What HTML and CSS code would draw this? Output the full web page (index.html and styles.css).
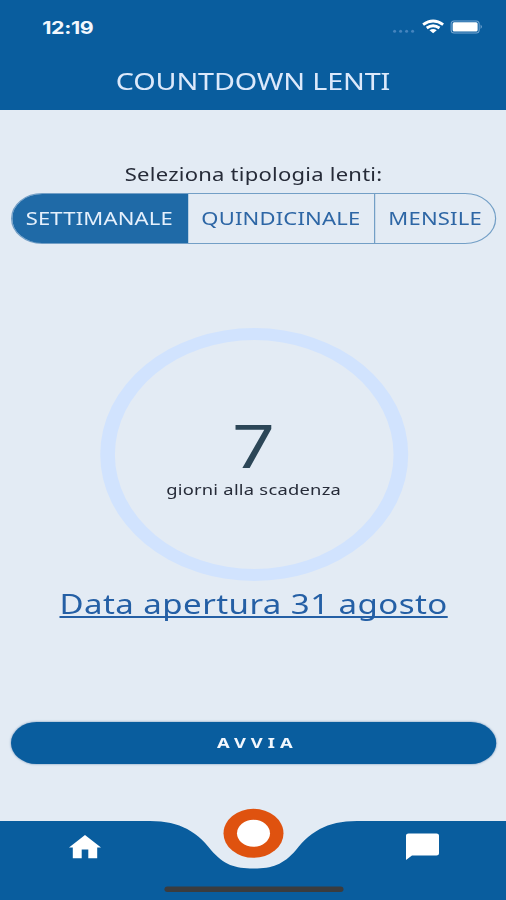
FILE: index.html
```html
<!DOCTYPE html>
<html lang="it">
<head>
<meta charset="utf-8">
<title>Countdown lenti</title>
<link rel="stylesheet" href="styles.css">
</head>
<body>
<div class="phone">
  <header class="header">
    <div class="status">
      <span class="time">12:19</span>
      <svg class="status-icons" viewBox="0 0 92 20" preserveAspectRatio="none">
        <g fill="#4584be"><circle cx="3.5" cy="13.2" r="1.5"/><circle cx="9.5" cy="13.2" r="1.5"/><circle cx="15.5" cy="13.2" r="1.5"/><circle cx="21.5" cy="13.2" r="1.5"/></g>
        <g fill="none" stroke="#fff" stroke-width="2.9"><path d="M32 6.6Q42 -.6 52 6.6"/><path d="M35.6 10Q42 5.4 48.4 10"/></g>
        <path d="M38.4 12.3Q42 9.8 45.6 12.3L42 15.2Z" fill="#fff"/>
        <rect x="60" y="2.9" width="28" height="12" rx="3" fill="none" stroke="#79a8d3"/>
        <rect x="61.5" y="4.3" width="25" height="9.2" rx="1.5" fill="#fff"/>
        <path d="M89.5 6.5Q92 8.8 89.5 11Z" fill="#79a8d3"/>
      </svg>
    </div>
    <h1 class="title">COUNTDOWN LENTI</h1>
  </header>
  <main class="main">
    <p class="label">Seleziona tipologia lenti:</p>
    <div class="segments">
      <button class="segment weekly active">SETTIMANALE</button>
      <button class="segment biweekly">QUINDICINALE</button>
      <button class="segment monthly">MENSILE</button>
    </div>
    <div class="ring">
      <span class="days">7</span>
      <span class="caption">giorni alla scadenza</span>
    </div>
    <a class="date">Data apertura 31 agosto</a>
    <button class="start">AVVIA</button>
  </main>
  <nav class="nav">
    <svg class="nav-art" viewBox="0 0 506 92" preserveAspectRatio="none">
      <path d="M0 13H150C181 13 198 25 211 42C224 57 235 60.5 253.5 60.5C272 60.5 283 57 296 42C309 25 326 13 357 13H506V92H0Z" fill="#095d9e"/>
      <ellipse cx="253.5" cy="25.3" rx="30" ry="24.5" fill="#df520f"/>
      <ellipse cx="253.5" cy="25.3" rx="16.5" ry="13.5" fill="#fff"/>
      <path d="M85 27L101 39.5H97.2V50.2H88.3V41.5H81.7V50.2H72.8V39.5H69Z" fill="#fff"/>
      <path d="M408.5 25.5H436.5Q439 25.5 439 27.5V45.5Q439 47.5 436.5 47.5H412L406 52V27.5Q406 25.5 408.5 25.5Z" fill="#fff"/>
      <rect x="164.5" y="78.5" width="179" height="5.5" rx="2.8" fill="#3b3c3e"/>
    </svg>
  </nav>
</div>
</body>
</html>
```

FILE: styles.css
```css
* {
  box-sizing: border-box;
}

body {
  margin: 0;
  width: 506px;
  height: 900px;
  overflow: hidden;
  background: #e3ebf4;
}

button {
  font: inherit;
  border: 0;
  padding: 0;
}

/* 414-point layout stretched to the window width */
.phone {
  width: 414px;
  height: 900px;
  display: flex;
  flex-direction: column;
  transform: scaleX(1.22222);
  transform-origin: 0 0;
  font-family: "Noto Sans", sans-serif;
  color: #262b38;
}

.header {
  height: 109.5px;
  background: #095d9e;
  color: #dce9fb;
}

.status {
  height: 54px;
  display: flex;
  justify-content: space-between;
  align-items: center;
  padding: 0 19px 0 34.5px;
}

.time {
  font: 700 17.5px/54px Inter, sans-serif;
  letter-spacing: -0.3px;
  color: #f2f7fd;
  padding-top: 1px;
}

.status-icons {
  width: 75.3px;
  height: 20px;
  margin-top: 1px;
}

.title {
  margin: 10px 0 0;
  font-size: 23.5px;
  line-height: 34px;
  font-weight: 400;
  text-align: center;
  letter-spacing: -0.12px;
}

.main {
  display: flex;
  flex-direction: column;
  align-items: center;
  height: 698.5px;
  padding: 51px 8px 0 9px;
}

.label {
  margin: 0 0 6.5px;
  font-size: 18px;
  line-height: 26px;
  letter-spacing: 0.2px;
}

.segments {
  width: 397.5px;
  height: 51px;
  display: flex;
  border: 1px solid #739fc6;
  border-radius: 26px;
  overflow: hidden;
}

.segment {
  background: transparent;
  color: #2d66a5;
  font-size: 18px;
  letter-spacing: 0.15px;
  text-align: center;
  padding-bottom: 1px;
}

.segment.active {
  background: #1f6aa7;
  color: #e5f0fc;
}

.weekly {
  width: 144px;
  padding-right: 1px;
}

.biweekly {
  width: 153px;
  border-right: 1px solid #739fc6;
}

.monthly {
  flex: 1;
}

.ring {
  width: 252px;
  height: 253px;
  margin-top: 83.5px;
  border: 12.5px solid #d1e3fe;
  border-radius: 50%;
  display: flex;
  flex-direction: column;
  align-items: center;
}

.days {
  font-size: 61px;
  line-height: 80px;
  margin-top: 65px;
  color: #2c4657;
}

.caption {
  font-size: 15px;
  line-height: 20px;
  letter-spacing: 0.2px;
  margin-top: -6px;
}

.date {
  margin-top: 4px;
  font-size: 27px;
  line-height: 38px;
  letter-spacing: 0.37px;
  color: #245fa5;
  text-decoration: underline;
  text-decoration-thickness: 1.5px;
  text-underline-offset: 2px;
  text-decoration-skip-ink: none;
}

.start {
  width: 397.5px;
  height: 42px;
  margin-top: 99.5px;
  border-radius: 21px;
  background: #095d9e;
  box-shadow: 0 0 2px #5b83ae;
  color: #f2f7fd;
  font-size: 15px;
  font-weight: 700;
  letter-spacing: 4.1px;
  text-indent: 6px;
  padding-bottom: 2px;
}

.nav {
  height: 92px;
}

.nav-art {
  display: block;
  width: 414px;
  height: 92px;
}
```
